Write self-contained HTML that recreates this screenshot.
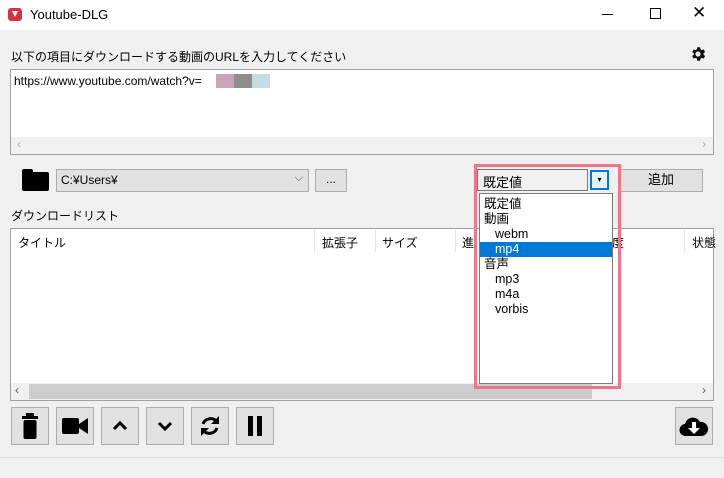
<!DOCTYPE html><html><head><meta charset="utf-8"><style>
*{margin:0;padding:0;box-sizing:border-box}
body{width:724px;height:478px;background:#f0f0f0;font-family:"Liberation Sans","Noto Sans CJK JP",sans-serif;font-size:12px;color:#000;position:relative;overflow:hidden}
.a{position:absolute}
.btn{position:absolute;background:#e1e1e1;border:1px solid #adadad}
.ib{position:absolute;top:407px;width:38px;height:38px;background:#e1e1e1;border:1px solid #adadad;display:flex;align-items:center;justify-content:center}
</style></head><body>
<div class="a" style="left:0;top:0;width:724px;height:30px;background:#fff"></div>
<div class="a" style="left:8px;top:8px;width:14px;height:13px;background:#d9333f;border-radius:3px"></div>
<div class="a" style="left:12px;top:11px;width:6px;height:6px;background:#fff;clip-path:polygon(0 0,100% 0,50% 100%)"></div>
<div class="a" style="left:30px;top:7px;font-size:13px">Youtube-DLG</div>
<div class="a" style="left:602px;top:14px;width:11px;height:1px;background:#000"></div>
<div class="a" style="left:650px;top:8px;width:11px;height:11px;border:1px solid #000"></div>
<div class="a" style="left:692px;top:3px;font-size:17px;font-weight:300">✕</div>
<div class="a" style="left:11px;top:48px">以下の項目にダウンロードする動画のURLを入力してください</div>
<svg class="a" style="left:689px;top:45px" width="18" height="18" viewBox="0 0 24 24"><path fill="#111" d="M19.4 13a7.5 7.5 0 000-2l2.1-1.6-2-3.5-2.5 1a7 7 0 00-1.7-1L14.9 3h-4l-.4 2.9a7 7 0 00-1.7 1l-2.5-1-2 3.5L6.4 11a7.5 7.5 0 000 2l-2.1 1.6 2 3.5 2.5-1a7 7 0 001.7 1l.4 2.9h4l.4-2.9a7 7 0 001.7-1l2.5 1 2-3.5zM12 15.5a3.5 3.5 0 110-7 3.5 3.5 0 010 7z"/></svg>
<div class="a" style="left:10px;top:69px;width:704px;height:86px;background:#fff;border:1px solid #a0a0a0"></div>
<div class="a" style="left:14px;top:74px">https://www.youtube.com/watch?v=</div>
<div class="a" style="left:216px;top:74px;width:18px;height:14px;background:#c9a3b8"></div>
<div class="a" style="left:234px;top:74px;width:18px;height:14px;background:#8f8f88"></div>
<div class="a" style="left:252px;top:74px;width:18px;height:14px;background:#c5dbe6"></div>
<div class="a" style="left:11px;top:137px;width:702px;height:17px;background:#f0f0f0"></div>
<div class="a" style="left:17px;top:137px;color:#aaa">‹</div><div class="a" style="left:702px;top:137px;color:#aaa">›</div>
<div class="a" style="left:22px;top:172px;width:27px;height:19px;background:#000;border-radius:2px"></div>
<div class="a" style="left:22px;top:169px;width:11px;height:5px;background:#000;border-radius:2px 2px 0 0"></div>
<div class="btn" style="left:56px;top:169px;width:253px;height:23px;padding:3px 4px">C:¥Users¥<span style="position:absolute;right:5px;top:2px;font-size:11px;color:#444">⌵</span></div>
<div class="btn" style="left:315px;top:169px;width:32px;height:23px;text-align:center;line-height:18px">...</div>
<div class="btn" style="left:619px;top:169px;width:84px;height:23px;text-align:center;line-height:20px;font-size:13px">追加</div>
<div class="a" style="left:11px;top:207px">ダウンロードリスト</div>
<div class="a" style="left:10px;top:228px;width:704px;height:173px;background:#fff;border:1px solid #a0a0a0"></div>
<div class="a" style="left:18px;top:234px">タイトル</div>
<div class="a" style="left:314px;top:230px;width:1px;height:22px;background:#e5e5e5"></div>
<div class="a" style="left:322px;top:234px">拡張子</div>
<div class="a" style="left:375px;top:230px;width:1px;height:22px;background:#e5e5e5"></div>
<div class="a" style="left:382px;top:234px">サイズ</div>
<div class="a" style="left:455px;top:230px;width:1px;height:22px;background:#e5e5e5"></div>
<div class="a" style="left:462px;top:234px">進</div>
<div class="a" style="left:612px;top:234px">度</div>
<div class="a" style="left:684px;top:230px;width:1px;height:22px;background:#e5e5e5"></div>
<div class="a" style="left:692px;top:234px">状態</div>
<div class="a" style="left:11px;top:383px;width:702px;height:17px;background:#f0f0f0"></div>
<div class="a" style="left:29px;top:384px;width:563px;height:15px;background:#cdcdcd"></div>
<div class="a" style="left:15px;top:383px;color:#555">‹</div><div class="a" style="left:702px;top:383px;color:#555">›</div>
<div class="a" style="left:474px;top:164px;width:147px;height:225px;border:3px solid #f07587"></div>
<div class="a" style="left:477px;top:169px;width:111px;height:22px;background:#f0f0f0;border:1px solid #7a7a7a;padding:2px 5px;font-size:13px">既定値</div>
<div class="a" style="left:590px;top:170px;width:19px;height:20px;background:#e5f1fb;border:2px solid #0078d7;text-align:center;font-size:8px;line-height:15px">▾</div>
<div class="a" style="left:479px;top:193px;width:134px;height:191px;background:#fff;border:1px solid #7a7a7a;font-size:12.5px;line-height:15px;padding-top:3px">
<div style="padding-left:4px">既定値</div><div style="padding-left:4px">動画</div><div style="padding-left:15px">webm</div><div style="padding-left:15px;background:#0078d7;color:#fff">mp4</div><div style="padding-left:4px">音声</div><div style="padding-left:15px">mp3</div><div style="padding-left:15px">m4a</div><div style="padding-left:15px">vorbis</div></div>
<div class="ib" style="left:11px"><svg width="16" height="26" viewBox="0 0 16 26"><rect x="4" y="0" width="8" height="3" fill="#000"/><rect x="0" y="3" width="16" height="3" fill="#000"/><rect x="1.5" y="7" width="13" height="19" rx="2" fill="#000"/></svg></div>
<div class="ib" style="left:56px"><svg width="26" height="18" viewBox="0 0 26 18"><rect x="0" y="1" width="17" height="16" rx="2" fill="#000"/><path d="M17 7l9-6v16l-9-6z" fill="#000"/></svg></div>
<div class="ib" style="left:101px"><svg width="16" height="10" viewBox="0 0 16 10"><path d="M2 8l6-6 6 6" stroke="#000" stroke-width="3" fill="none"/></svg></div>
<div class="ib" style="left:146px"><svg width="16" height="10" viewBox="0 0 16 10"><path d="M2 2l6 6 6-6" stroke="#000" stroke-width="3" fill="none"/></svg></div>
<div class="ib" style="left:191px"><svg width="24" height="24" viewBox="0 0 24 24"><path d="M19 8a8 8 0 00-14 2M5 16a8 8 0 0014-2" stroke="#000" stroke-width="3" fill="none"/><path d="M21 2v8h-8zM3 22v-8h8z" fill="#000"/></svg></div>
<div class="ib" style="left:236px"><svg width="16" height="20"><rect x="1" y="0" width="5" height="20" fill="#000"/><rect x="10" y="0" width="5" height="20" fill="#000"/></svg></div>
<div class="ib" style="left:675px"><svg width="30" height="24" viewBox="0 0 30 24"><path d="M7 22a6 6 0 01-1-12 8 8 0 0115-2 7 7 0 012 14z" fill="#000"/><path d="M13 8h4v6h4l-6 6-6-6h4z" fill="#fff"/></svg></div>
<div class="a" style="left:0;top:457px;width:724px;height:1px;background:#dcdcdc"></div>
</body></html>
